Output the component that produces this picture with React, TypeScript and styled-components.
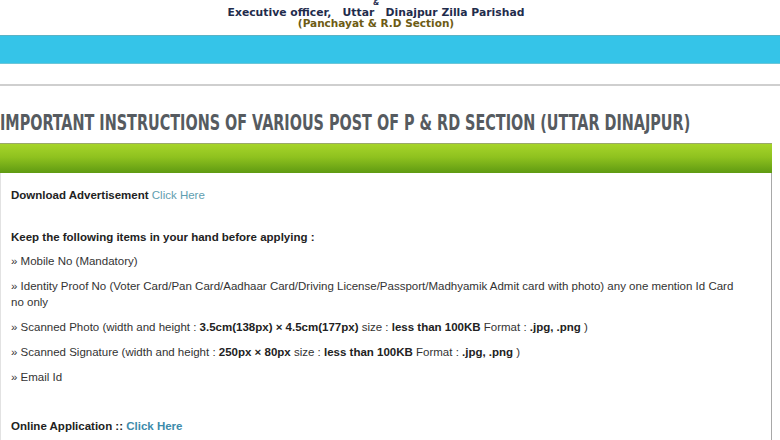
import React from 'react';
import styled, { createGlobalStyle } from 'styled-components';

const GlobalStyle = createGlobalStyle`
  html, body {
    margin: 0;
    padding: 0;
    background: #ffffff;
    overflow: hidden;
  }
  body {
    font-family: "Liberation Sans", Arial, sans-serif;
  }
`;

const Page = styled.div`
  width: 780px;
  height: 440px;
  overflow: hidden;
`;

const Masthead = styled.header`
  height: 35px;
  display: flex;
  flex-direction: column;
  align-items: center;
  padding-right: 28px;
  box-sizing: border-box;
  overflow: hidden;
  font-family: "DejaVu Sans", Verdana, sans-serif;
  font-weight: bold;
`;

const Amp = styled.div`
  font-size: 7px;
  line-height: 7px;
  height: 7px;
  color: #1f2c4c;
`;

const Title = styled.div`
  font-size: 10.8px;
  line-height: 11px;
  color: #1f2c4c;
  white-space: pre;
`;

const Subtitle = styled.div`
  font-size: 10.5px;
  line-height: 11px;
  color: #6d5b14;
`;

const CyanBar = styled.div`
  height: 27px;
  background: #35c4e8;
  border-top: 1px solid #5ab3c6;
  border-bottom: 1px solid #6cc6d8;
`;

const NavStrip = styled.div`
  height: 20px;
  border-bottom: 2px solid #cfcfcf;
`;

const Heading = styled.h1`
  margin: 0;
  height: 57px;
  box-sizing: border-box;
  display: flex;
  align-items: flex-end;
  padding-bottom: 8px;
  font-family: "DejaVu Sans", sans-serif;
  font-stretch: condensed;
  font-weight: bold;
  font-size: 20.5px;
  line-height: 23px;
  color: #565b60;
  white-space: nowrap;
`;

const HeadingText = styled.span`
  display: inline-block;
  transform: scaleX(0.78);
  transform-origin: left center;
`;

const Panel = styled.section`
  width: 772px;
  box-sizing: border-box;
`;

const PanelBar = styled.div`
  height: 29px;
  border-top: 1px solid #9aa86a;
  background: linear-gradient(to bottom, #a6d42a 0%, #8fc21f 45%, #5f9a12 100%);
`;

const PanelBody = styled.div`
  border-left: 1px solid #e2e2e2;
  border-right: 1px solid #a8a8a8;
  padding: 14px 22px 40px 10px;
  font-size: 11.5px;
  line-height: 16px;
  color: #333333;
`;

const Line = styled.p<{ $gap?: number }>`
  margin: 0 0 ${({ $gap }) => ($gap ?? 9)}px;
`;

const Strong = styled.b`
  color: #222222;
`;

const LinkText = styled.a<{ $bold?: boolean }>`
  color: ${({ $bold }) => ($bold ? '#3d8bab' : '#5f9eb0')};
  font-weight: ${({ $bold }) => ($bold ? 'bold' : 'normal')};
  text-decoration: none;
`;

const App: React.FC = () => {
  return (
    <Page>
      <GlobalStyle />
      <Masthead>
        <Amp>&amp;</Amp>
        <Title>{'Executive officer,   Uttar   Dinajpur Zilla Parishad'}</Title>
        <Subtitle>(Panchayat &amp; R.D Section)</Subtitle>
      </Masthead>
      <CyanBar />
      <NavStrip />
      <Heading>
        <HeadingText>IMPORTANT INSTRUCTIONS OF VARIOUS POST OF P &amp; RD SECTION (UTTAR DINAJPUR)</HeadingText>
      </Heading>
      <Panel>
        <PanelBar />
        <PanelBody>
          <Line $gap={26}>
            <Strong>Download Advertisement</Strong> <LinkText href="#">Click Here</LinkText>
          </Line>
          <Line $gap={8}>
            <Strong>Keep the following items in your hand before applying :</Strong>
          </Line>
          <Line>» Mobile No (Mandatory)</Line>
          <Line>
            » Identity Proof No (Voter Card/Pan Card/Aadhaar Card/Driving License/Passport/Madhyamik Admit card with
            photo) any one mention Id Card no only
          </Line>
          <Line>
            » Scanned Photo (width and height : <Strong>3.5cm(138px) × 4.5cm(177px)</Strong> size :{' '}
            <Strong>less than 100KB</Strong> Format : <Strong>.jpg, .png</Strong> )
          </Line>
          <Line>
            » Scanned Signature (width and height : <Strong>250px × 80px</Strong> size :{' '}
            <Strong>less than 100KB</Strong> Format : <Strong>.jpg, .png</Strong> )
          </Line>
          <Line $gap={33}>» Email Id</Line>
          <Line>
            <Strong>Online Application ::</Strong> <LinkText href="#" $bold>Click Here</LinkText>
          </Line>
        </PanelBody>
      </Panel>
    </Page>
  );
};

export default App;
